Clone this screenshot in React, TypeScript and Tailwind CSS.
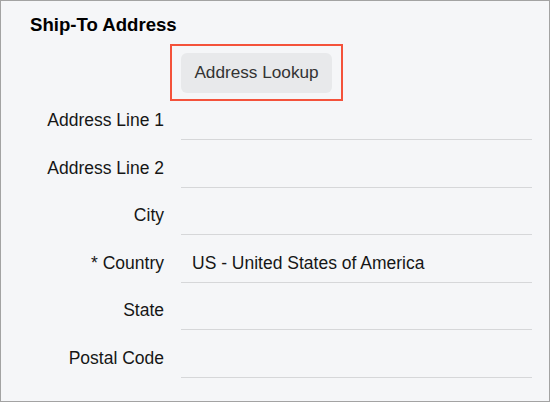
import React from 'react';

const rows: { label: string; value?: string; first?: boolean }[] = [
  { label: 'Address Line 1', first: true },
  { label: 'Address Line 2' },
  { label: 'City' },
  { label: '* Country', value: 'US - United States of America' },
  { label: 'State' },
  { label: 'Postal Code' },
];

export default function App() {
  return (
    <div
      className="w-[550px] h-[402px] border border-[#a3a3a3] bg-[#f5f6f8] text-[#161616] overflow-hidden"
      style={{ fontFamily: '"Liberation Sans", Arial, sans-serif' }}
    >
      <h2 className="pl-[29px] pt-[13px] text-[18.6px] leading-[21px] font-bold text-black">Ship-To Address</h2>

      {/* lookup button, highlighted */}
      <div className="flex mt-[9px]">
        <div className="w-[163px] shrink-0" />
        <div className="ml-[6px] border-2 border-[#f4523b] px-[9px] pt-[7px] pb-[6px]">
          <button className="w-[151px] h-[40px] rounded-md bg-[#e8e9eb] text-[17.2px] text-[#333]">
            Address Lookup
          </button>
        </div>
      </div>

      <div className="pr-[17px]">
        {rows.map((r) => (
          <div key={r.label} className={`flex items-stretch ${r.first ? 'h-[39px]' : 'h-[47.5px]'}`}>
            <div className="w-[163px] shrink-0 flex items-end justify-end pb-[10px] text-[17.5px] leading-[20px]">
              {r.label}
            </div>
            <div className="ml-[17px] flex-1 flex items-end border-b border-[#d6d7d9] pb-[9px] pl-[11px] text-[17.5px] leading-[20px]">
              {r.value ?? ''}
            </div>
          </div>
        ))}
      </div>
    </div>
  );
}
